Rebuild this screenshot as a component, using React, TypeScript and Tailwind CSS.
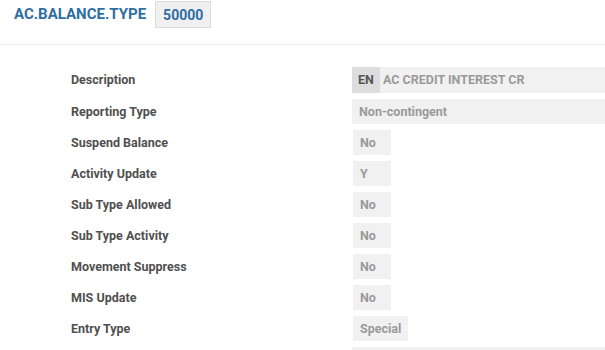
import React from "react";

const rows: { label: string; value: string; wide?: boolean; lang?: boolean }[] = [
  { label: "Description", value: "AC CREDIT INTEREST CR", wide: true, lang: true },
  { label: "Reporting Type", value: "Non-contingent", wide: true },
  { label: "Suspend Balance", value: "No" },
  { label: "Activity Update", value: "Y" },
  { label: "Sub Type Allowed", value: "No" },
  { label: "Sub Type Activity", value: "No" },
  { label: "Movement Suppress", value: "No" },
  { label: "MIS Update", value: "No" },
  { label: "Entry Type", value: "Special" },
  { label: "", value: "", wide: true },
];

export default function App() {
  return (
    <div
      className="w-[605px] h-[350px] overflow-hidden bg-white"
      style={{ fontFamily: "Roboto, 'Liberation Sans', sans-serif" }}
    >
      <div className="flex items-start pl-[14px] pt-[1px] h-[45px] border-b border-[#ececec]">
        <div className="flex items-center h-[27px]">
          <span className="text-[15px] font-bold text-[#2f6ea5] leading-none">AC.BALANCE.TYPE</span>
          <span className="ml-[9px] h-[27px] px-[7px] flex items-center bg-[#f0f0f0] border border-[#dcdcdc] text-[14px] font-bold text-[#2f6ea5] leading-none">
            50000
          </span>
        </div>
      </div>
      <div className="pt-[22px] flex flex-col gap-[6px]">
        {rows.map((r, i) => (
          <div key={i} className="flex items-center">
            <div className="w-[352px] pl-[71px] pt-[1px] text-[12.5px] font-bold text-[#505050]">{r.label}</div>
            {r.wide ? (
              <div className={`flex-1 flex items-stretch bg-[#f1f1f1] ${r.lang ? "h-[26px]" : "h-[25px]"}`}>
                {r.lang && (
                  <span className="w-[28px] flex items-center justify-center bg-[#dddddd] text-[12.5px] font-bold text-[#555555]">
                    EN
                  </span>
                )}
                <span className={`flex items-center pt-[1px] text-[12.5px] font-bold text-[#9a9a9a] ${r.lang ? "pl-[3px]" : "pl-[7px]"}`}>
                  {r.value}
                </span>
              </div>
            ) : (
              <div className="ml-[1px] h-[25px] min-w-[38px] px-[7px] pt-[1px] flex items-center bg-[#f1f1f1] text-[12.5px] font-bold text-[#9a9a9a]">
                {r.value}
              </div>
            )}
          </div>
        ))}
      </div>
    </div>
  );
}
